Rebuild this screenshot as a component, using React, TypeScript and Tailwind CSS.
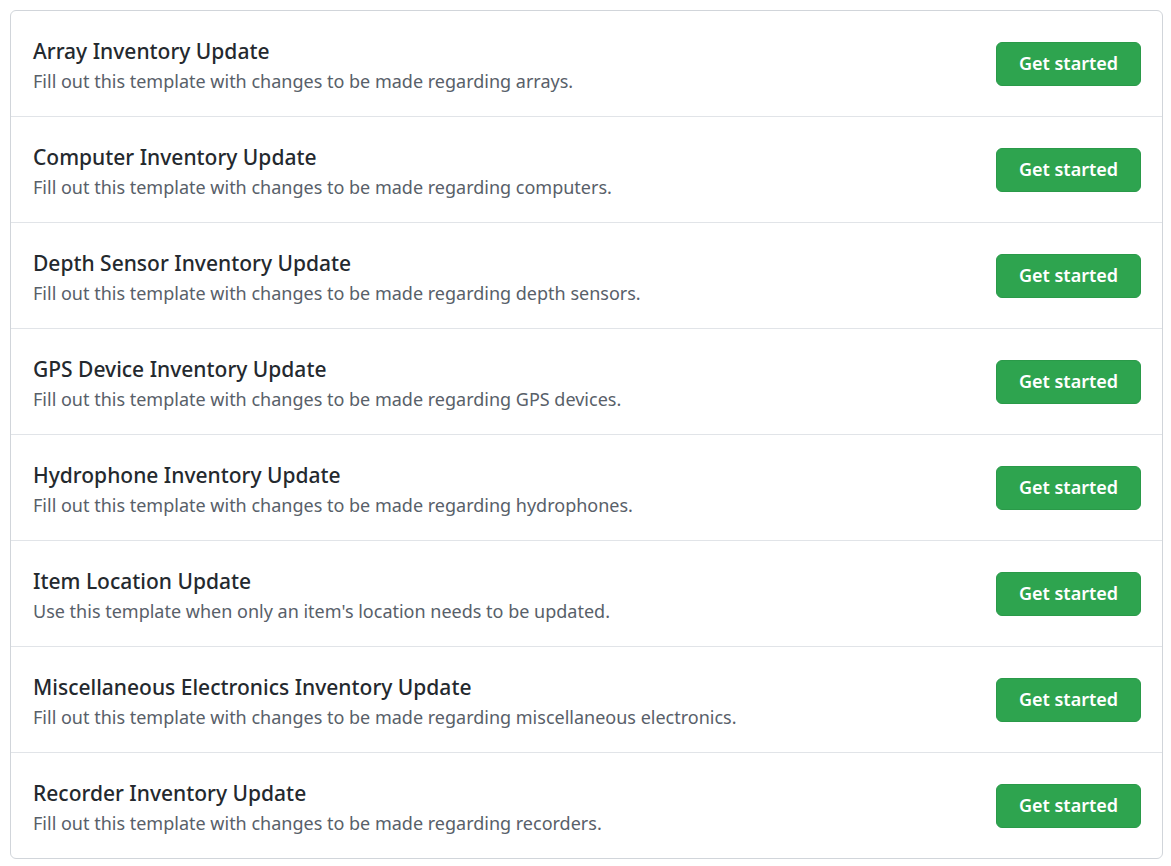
import React from 'react';

interface Template {
  title: string;
  description: string;
}

const templates: Template[] = [
  { title: 'Array Inventory Update', description: 'Fill out this template with changes to be made regarding arrays.' },
  { title: 'Computer Inventory Update', description: 'Fill out this template with changes to be made regarding computers.' },
  { title: 'Depth Sensor Inventory Update', description: 'Fill out this template with changes to be made regarding depth sensors.' },
  { title: 'GPS Device Inventory Update', description: 'Fill out this template with changes to be made regarding GPS devices.' },
  { title: 'Hydrophone Inventory Update', description: 'Fill out this template with changes to be made regarding hydrophones.' },
  { title: 'Item Location Update', description: "Use this template when only an item's location needs to be updated." },
  { title: 'Miscellaneous Electronics Inventory Update', description: 'Fill out this template with changes to be made regarding miscellaneous electronics.' },
  { title: 'Recorder Inventory Update', description: 'Fill out this template with changes to be made regarding recorders.' },
];

export default function App() {
  return (
    <div
      className="min-h-screen bg-white p-[10px] pr-[8px]"
      style={{ fontFamily: '"Noto Sans", "Open Sans", sans-serif' }}
    >
      <div className="border border-[#d1d5da] rounded-[6px]">
        {templates.map((t, i) => (
          <div
            key={t.title}
            className={`flex items-center justify-between pl-[22px] pr-[21px] ${
              i > 0 ? 'h-[106px] border-t border-[#e1e4e8]' : 'h-[105px]'
            }`}
          >
            <div className="min-w-0 pt-[4px]">
              <h3 className="text-[21px] leading-[28px] font-medium text-[#24292e]">{t.title}</h3>
              <p className="text-[18px] leading-[27px] text-[#586069] mt-[3px]">{t.description}</p>
            </div>
            <button className="shrink-0 w-[145px] h-[44px] rounded-[6px] bg-[#2ea44f] border border-[#2a9a49] text-white text-[18px] font-semibold">
              Get started
            </button>
          </div>
        ))}
      </div>
    </div>
  );
}
